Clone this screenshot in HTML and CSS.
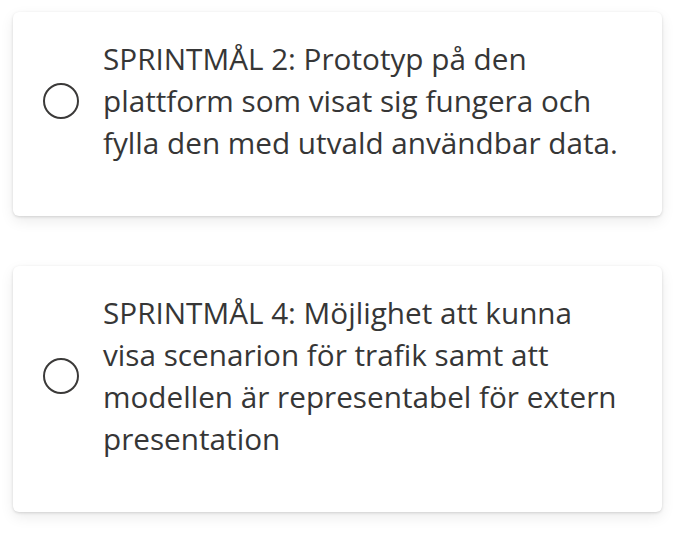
FILE: index.html
```html
<!DOCTYPE html>
<html lang="sv">
<head>
    <meta charset="UTF-8">
    <meta name="viewport" content="width=device-width, initial-scale=1.0">
    <title>Sprintmål</title>
    <link rel="stylesheet" href="styles.css">
</head>
<body>
    <div class="goals">
        <label class="goal">
            <span class="radio"></span>
            <span class="goal-text">SPRINTMÅL 2: Prototyp på den<br>plattform som visat sig fungera och<br>fylla den med utvald användbar data.</span>
        </label>
        <label class="goal">
            <span class="radio"></span>
            <span class="goal-text">SPRINTMÅL 4: Möjlighet att kunna<br>visa scenarion för trafik samt att<br>modellen är representabel för extern<br>presentation</span>
        </label>
    </div>
</body>
</html>
```

FILE: styles.css
```css
body {
    margin: 0;
    background-color: #fff;
    font-family: "Open Sans", "Noto Sans", sans-serif;
}
.goals {
    display: flex;
    flex-direction: column;
    gap: 50px;
    padding: 12px 15px 23px 13px;
}
.goal {
    display: flex;
    align-items: center;
    gap: 24px;
    padding: 26px 20px 52px 30px;
    background-color: #fff;
    border-radius: 6px;
    box-shadow: 0 1px 3px rgba(0,0,0,0.14), 0 5px 14px rgba(0,0,0,0.08);
}
.radio {
    flex: none;
    width: 32px;
    height: 32px;
    border: 2px solid #3b3a39;
    border-radius: 50%;
}
.goal-text {
    font-size: 29.7px;
    line-height: 42px;
    color: #363636;
}
```
